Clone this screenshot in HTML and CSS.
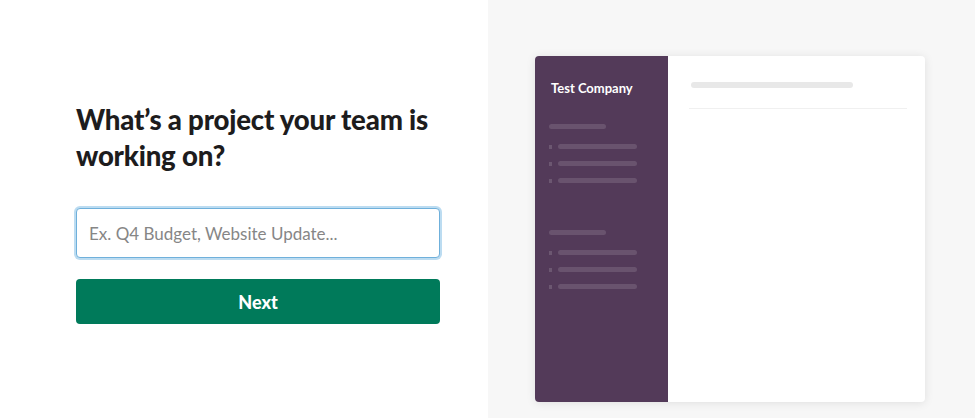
FILE: index.html
```html
<!DOCTYPE html>
<html lang="en">
<head>
    <meta charset="UTF-8">
    <title>Create a project</title>
    <link rel="stylesheet" href="styles.css">
</head>
<body>
<div class="page">
    <div class="form-side">
        <form class="project-form">
            <h1 class="title">What’s a project your team is working on?</h1>
            <input type="text" class="project-input" placeholder="Ex. Q4 Budget, Website Update...">
            <button type="button" class="next-button">Next</button>
        </form>
    </div>
    <div class="preview-side">
        <div class="preview-card">
            <div class="sidebar">
                <div class="company">Test Company</div>
                <div class="group">
                    <div class="group-head"></div>
                    <div class="item"><span class="dot"></span><span class="line"></span></div>
                    <div class="item"><span class="dot"></span><span class="line"></span></div>
                    <div class="item"><span class="dot"></span><span class="line"></span></div>
                </div>
                <div class="group">
                    <div class="group-head"></div>
                    <div class="item"><span class="dot"></span><span class="line"></span></div>
                    <div class="item"><span class="dot"></span><span class="line"></span></div>
                    <div class="item"><span class="dot"></span><span class="line"></span></div>
                </div>
            </div>
            <div class="main">
                <div class="main-bar"></div>
                <div class="main-rule"></div>
            </div>
        </div>
    </div>
</div>
</body>
</html>
```

FILE: styles.css
```css
body {
    margin: 0;
    font-family: Lato, "Noto Sans", sans-serif;
    background: #ffffff;
}

.page {
    display: flex;
    height: 418px;
}

.form-side {
    width: 488px;
    box-sizing: border-box;
    padding: 102px 48px 0 76px;
}

.project-form {
    display: flex;
    flex-direction: column;
    width: 364px;
}

.title {
    margin: 0 0 34px 0;
    font-size: 27.6px;
    line-height: 36px;
    font-weight: 900;
    color: #1d1c1d;
    letter-spacing: -0.2px;
}

.project-input {
    height: 50px;
    box-sizing: border-box;
    border: 1px solid #6fb0db;
    border-radius: 4px;
    box-shadow: 0 0 0 2px #bcdcf1;
    padding: 0 12px;
    font-family: Lato, sans-serif;
    font-size: 17px;
    color: #1d1c1d;
    outline: none;
}

.project-input::placeholder {
    color: #868686;
}

.next-button {
    margin-top: 21px;
    height: 45px;
    border: 0;
    border-radius: 4px;
    background: #007a5a;
    color: #ffffff;
    font-family: Lato, sans-serif;
    font-size: 18px;
    font-weight: 900;
}

.preview-side {
    flex: 1;
    background: #f7f7f7;
    padding: 56px 50px 16px 47px;
}

.preview-card {
    display: flex;
    height: 346px;
    border-radius: 4px;
    background: #ffffff;
    box-shadow: 0 1px 10px rgba(0, 0, 0, 0.1);
    overflow: hidden;
}

.sidebar {
    width: 133px;
    background: #533a59;
    padding: 24px 14px 0 14px;
    box-sizing: border-box;
}

.company {
    margin-left: 2px;
    color: #ffffff;
    font-size: 13px;
    line-height: 16px;
    font-weight: 700;
}

.group {
    margin-top: 28px;
}

.group + .group {
    margin-top: 41px;
}

.group-head {
    width: 57px;
    height: 5px;
    border-radius: 3px;
    background: rgba(255, 255, 255, 0.13);
    margin-bottom: 9px;
}

.item {
    display: flex;
    align-items: center;
    gap: 6px;
    height: 17px;
}

.dot {
    width: 3px;
    height: 4px;
    background: rgba(255, 255, 255, 0.15);
}

.line {
    width: 79px;
    height: 5px;
    border-radius: 3px;
    background: rgba(255, 255, 255, 0.13);
}

.main {
    flex: 1;
    padding: 26px 18px 0 21px;
}

.main-bar {
    margin-left: 2px;
    width: 162px;
    height: 6px;
    border-radius: 3px;
    background: #e8e8e8;
}

.main-rule {
    margin-top: 20px;
    height: 1px;
    background: #f0f0f0;
}
```
